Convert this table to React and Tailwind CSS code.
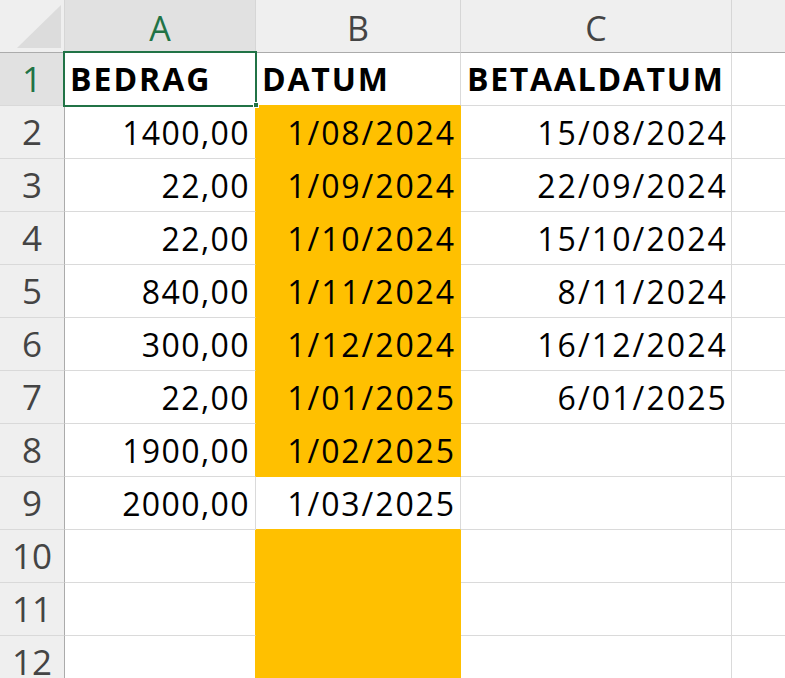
import React from "react";

const rows = [
  ["BEDRAG", "DATUM", "BETAALDATUM"],
  ["1400,00", "1/08/2024", "15/08/2024"],
  ["22,00", "1/09/2024", "22/09/2024"],
  ["22,00", "1/10/2024", "15/10/2024"],
  ["840,00", "1/11/2024", "8/11/2024"],
  ["300,00", "1/12/2024", "16/12/2024"],
  ["22,00", "1/01/2025", "6/01/2025"],
  ["1900,00", "1/02/2025", ""],
  ["2000,00", "1/03/2025", ""],
  ["", "", ""],
  ["", "", ""],
  ["", "", ""],
];

const orangeRows = [2, 3, 4, 5, 6, 7, 8, 10, 11, 12];
const isOrange = (r) => orangeRows.includes(r);

const font = { fontFamily: '"Open Sans", "Noto Sans", sans-serif' };

export default function App() {
  return (
    <div className="relative w-[785px] h-[678px] overflow-hidden bg-white" style={font}>
      <div className="grid grid-cols-[65px_191px_205px_271px_1fr] auto-rows-[53px]">
        {/* header row */}
        <div className="relative bg-[#efefef] border-r border-b border-r-[#d6d6d6] border-b-[#ababab]">
          <svg className="absolute inset-0" width="64" height="52" viewBox="0 0 64 52">
            <polygon points="17,48 61,48 61,5" fill="#dcdcdc" />
          </svg>
        </div>
        <div className="flex items-end justify-center bg-[#e1e1e1] border-r border-b border-r-[#d6d6d6] border-b-[#ababab] text-[34px] leading-none pb-[7px] text-[#217346]">
          A
        </div>
        <div className="flex items-end justify-center bg-[#efefef] border-r border-b border-r-[#d6d6d6] border-b-[#ababab] text-[34px] leading-none pb-[7px] text-[#444444]">
          B
        </div>
        <div className="flex items-end justify-center bg-[#efefef] border-r border-b border-r-[#d6d6d6] border-b-[#ababab] text-[34px] leading-none pb-[7px] text-[#444444]">
          C
        </div>
        <div className="bg-[#efefef] border-b border-b-[#ababab]" />

        {rows.map((row, i) => {
          const r = i + 1;
          const bOrange = isOrange(r);
          const bBottomOrange = bOrange || isOrange(r + 1);
          const header = r === 1;
          return (
            <React.Fragment key={r}>
              <div
                className={
                  "flex items-end justify-center border-r border-b border-r-[#ababab] border-b-[#d9d9d9] text-[35px] leading-none pb-[9px] " +
                  (header ? "bg-[#e1e1e1] text-[#217346]" : "bg-[#efefef] text-[#444444]")
                }
              >
                {r}
              </div>
              <div
                className={
                  "flex items-end border-b border-b-[#dadada] border-r text-[32px] leading-none text-black whitespace-nowrap " +
                  (bOrange ? "border-r-[#ffc000] " : "border-r-[#dadada] ") +
                  (header
                    ? "justify-start pl-[5px] pb-[10px] font-bold tracking-[2px]"
                    : "justify-end pr-[5px] pb-[9px] tracking-[1.4px]")
                }
              >
                {row[0]}
              </div>
              <div
                className={
                  "flex items-end border-b border-r text-[32px] leading-none text-black whitespace-nowrap " +
                  (bOrange ? "bg-[#ffc000] border-r-[#ffc000] " : "bg-white border-r-[#dadada] ") +
                  (bBottomOrange ? "border-b-[#ffc000] " : "border-b-[#dadada] ") +
                  (header
                    ? "justify-start pl-[6px] pb-[10px] font-bold tracking-[1.8px]"
                    : "justify-end pr-[4px] pb-[9px] tracking-[1.9px]")
                }
              >
                {row[1]}
              </div>
              <div
                className={
                  "flex items-end border-b border-r border-b-[#dadada] border-r-[#dadada] text-[32px] leading-none text-black whitespace-nowrap " +
                  (header
                    ? "justify-start pl-[6px] pb-[10px] font-bold tracking-[1.7px]"
                    : "justify-end pr-[3px] pb-[9px] tracking-[2.1px]")
                }
              >
                {row[2]}
              </div>
              <div className="border-b border-b-[#dadada]" />
            </React.Fragment>
          );
        })}
      </div>

      {/* selection A1 */}
      <div className="absolute left-[63px] top-[51px] w-[194px] h-[56px] border-2 border-[#217346] pointer-events-none" />
      <div className="absolute left-[253px] top-[102px] w-[6px] h-[6px] bg-[#217346] border border-white" />
    </div>
  );
}
